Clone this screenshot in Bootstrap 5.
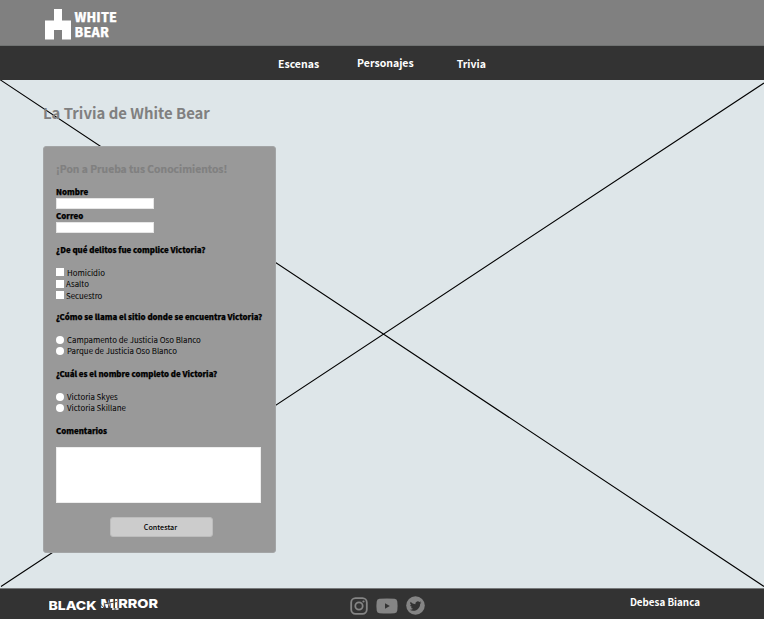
<!DOCTYPE html>
<html lang="es">
<head>
<meta charset="utf-8">
<meta name="viewport" content="width=device-width, initial-scale=1">
<title>La Trivia de White Bear</title>
<link href="https://cdn.jsdelivr.net/npm/bootstrap@5.3.0/dist/css/bootstrap.min.css" rel="stylesheet">
<style>
body{font-family:"Noto Sans CJK SC","Noto Sans",sans-serif;font-size:7.87px;line-height:12px;color:#000;background:#dee6e9;height:619px;overflow:hidden}
.top-bar{height:46px;background:#808080;border-bottom:1px solid #707372;padding:9px 0 0 45px}
.brand-name{font-weight:900;font-size:12.6px;line-height:15px;color:#fff;margin-left:3.5px;letter-spacing:.15px;-webkit-text-stroke:.25px #fff;white-space:nowrap}
.main-nav{height:34px;background:#333;padding:0 0 0 278px}
.main-nav a{color:#fff;font-size:10.5px;font-weight:700;line-height:16px;white-space:nowrap}
.link-escenas{margin:2px 38px 0 0}
.link-trivia{margin:2px 0 0 43px}
.stage{height:508px;padding:24px 0 0 43px}
.cross{inset:0;width:764px;height:508px}
.page-title{font-size:14.9px;font-weight:700;line-height:18px;color:#808080;margin:0 0 24px;white-space:nowrap}
.quiz{width:233px;height:407px;background:#999;border:1px solid #a3a5a6;border-radius:3px;padding:0 12px}
.quiz-title{font-size:10.3px;font-weight:700;line-height:14px;color:#808080;margin:15px 0 10px;white-space:nowrap;-webkit-text-stroke:.2px #808080}
.q{display:block;font-weight:900;height:12px;margin:0;white-space:nowrap;-webkit-text-stroke:.25px #000}
.q-checks{margin:11px 0 10.5px}
.q-place{margin:9.5px 0 11.5px}
.q-name{margin:11.5px 0 11.5px}
.q-notes{margin:11.5px 0 10.5px}
.form-control.field{width:98px;height:11px;min-height:0;background:#fff;border:1px solid #e6e6e6;border-radius:0;padding:0;margin-bottom:1px}
.opt{height:11px;line-height:11px;white-space:nowrap;gap:3px}
.opt-check{height:11.5px;line-height:11.5px}
.opt-near{gap:2px}
.form-check-input.tick{width:8px;height:8px;margin:0;border:0;border-radius:0;background:#fff;flex:none}
.form-check-input.tick[type=radio]{border-radius:50%}
.form-control.area{width:205px;height:56px;min-height:0;resize:none;border-radius:0;border:1px solid #eee;padding:0;background:#fff}
.send{width:103px;height:20px;background:#ccc;border:1px solid #bdbdbd;border-radius:3px;font-size:7.2px;font-weight:500;line-height:17px;padding:0 2px 0 0;color:#000;margin:14px auto 0 54px;display:block}
.foot{height:31px;background:#333;border-top:1px solid #777a7b;padding:0 64px 0 49px}
.author{color:#fff;font-size:9.8px;font-weight:700;line-height:16px;white-space:nowrap;margin-top:5px}
.studio{width:110px;height:18px;margin-top:6px}
.studio text{font-family:Inter,"Liberation Sans",sans-serif;font-weight:800;font-size:12.3px;fill:#fff}
.social{gap:8px;margin:7px 14px 0 0}
</style>
<script src="https://cdn.jsdelivr.net/npm/bootstrap@5.3.0/dist/js/bootstrap.bundle.min.js"></script>
</head>
<body>
<header class="top-bar d-flex align-items-start">
<svg width="26" height="31" viewBox="0 0 26 31"><path d="M9 0h8v11.500h9V30.500h-9V21H9v9.500H0V11.500h9z" fill="#fff"/></svg>
<div class="brand-name">WHITE<br>BEAR</div>
</header>
<nav class="main-nav d-flex align-items-center">
<a class="link-escenas text-decoration-none" href="#">Escenas</a>
<a class="text-decoration-none" href="#">Personajes</a>
<a class="link-trivia text-decoration-none" href="#">Trivia</a>
</nav>
<main class="stage position-relative">
<svg class="cross position-absolute" viewBox="0 0 764 508"><path d="M0 -.3L764 506.500M1 506.500L764 3" stroke="#000" stroke-width="1.100"/></svg>
<h1 class="page-title position-relative">La Trivia de White Bear</h1>
<form class="quiz position-relative">
<h2 class="quiz-title">¡Pon a Prueba tus Conocimientos!</h2>
<label class="q" for="nombre">Nombre</label>
<input class="form-control field" id="nombre" type="text">
<label class="q" for="correo">Correo</label>
<input class="form-control field" id="correo" type="email">
<p class="q q-checks">¿De qué delitos fue complice Victoria?</p>
<label class="opt opt-check d-flex align-items-center"><input class="form-check-input tick" type="checkbox">Homicidio</label>
<label class="opt opt-check opt-near d-flex align-items-center"><input class="form-check-input tick" type="checkbox">Asalto</label>
<label class="opt opt-check opt-near d-flex align-items-center"><input class="form-check-input tick" type="checkbox">Secuestro</label>
<p class="q q-place">¿Cómo se llama el sitio donde se encuentra Victoria?</p>
<label class="opt d-flex align-items-center"><input class="form-check-input tick" type="radio" name="sitio">Campamento de Justicia Oso Blanco</label>
<label class="opt d-flex align-items-center"><input class="form-check-input tick" type="radio" name="sitio">Parque de Justicia Oso Blanco</label>
<p class="q q-name">¿Cuál es el nombre completo de Victoria?</p>
<label class="opt d-flex align-items-center"><input class="form-check-input tick" type="radio" name="nombre-completo">Victoria Skyes</label>
<label class="opt d-flex align-items-center"><input class="form-check-input tick" type="radio" name="nombre-completo">Victoria Skillane</label>
<label class="q q-notes" for="comentarios">Comentarios</label>
<textarea class="form-control area" id="comentarios"></textarea>
<button class="btn send" type="button">Contestar</button>
</form>
</main>
<footer class="foot d-flex justify-content-between align-items-start">
<svg class="studio" viewBox="0 0 110 18">
<text x="-.5" y="14.700" textLength="48" lengthAdjust="spacingAndGlyphs">BLACK</text>
<text x="51.500" y="13.300" textLength="57.500" lengthAdjust="spacingAndGlyphs">MIRROR</text>
<path d="M51 8.500l5 5.500M55 9l13-2.500M61 3l-2 11M65.500 3v11" stroke="#333" stroke-width=".9"/>
<path d="M63 14h2.500M66.500 14h3" stroke="#fff" stroke-width="1.300"/>
</svg>
<div class="social d-flex align-items-center">
<svg width="18" height="18" viewBox="0 0 18 18" fill="none" stroke="#858585"><rect x="1.200" y="1.200" width="15.600" height="15.600" rx="4.300" stroke-width="1.800"/><circle cx="9" cy="9" r="3.700" stroke-width="1.800"/><circle cx="13.500" cy="4.500" r="1.100" fill="#858585" stroke="none"/></svg>
<svg width="22" height="16" viewBox="0 0 22 16"><path d="M3.500.8Q11 0 18.500.8 21 1 21.300 3.500 21.900 8 21.300 12.500 21 15 18.500 15.200 11 16 3.500 15.200 1 15 .7 12.500.1 8 .7 3.500 1 1 3.500.8z" fill="#858585"/><path d="M9 5.200v5.600L13.800 8z" fill="#333"/></svg>
<svg width="19" height="19" viewBox="0 0 19 19"><circle cx="9.500" cy="9.500" r="9.300" fill="#858585"/><path transform="translate(3.700 3.900) scale(.73)" d="M5 15c6 0 9.300-5 9.300-9.300v-.4A6.700 6.700 0 0 0 16 3.500a6.500 6.500 0 0 1-1.900.5 3.300 3.300 0 0 0 1.400-1.800 6.600 6.600 0 0 1-2.100.8 3.300 3.300 0 0 0-5.600 3A9.300 9.300 0 0 1 1.100 2.600a3.300 3.300 0 0 0 1 4.400 3.200 3.200 0 0 1-1.500-.4 3.300 3.300 0 0 0 2.600 3.200 3.300 3.300 0 0 1-1.500.1 3.300 3.300 0 0 0 3.100 2.300A6.600 6.600 0 0 1 0 13.500 9.300 9.300 0 0 0 5 15" fill="#333"/></svg>
</div>
<span class="author">Debesa Bianca</span>
</footer>
</body>
</html>
